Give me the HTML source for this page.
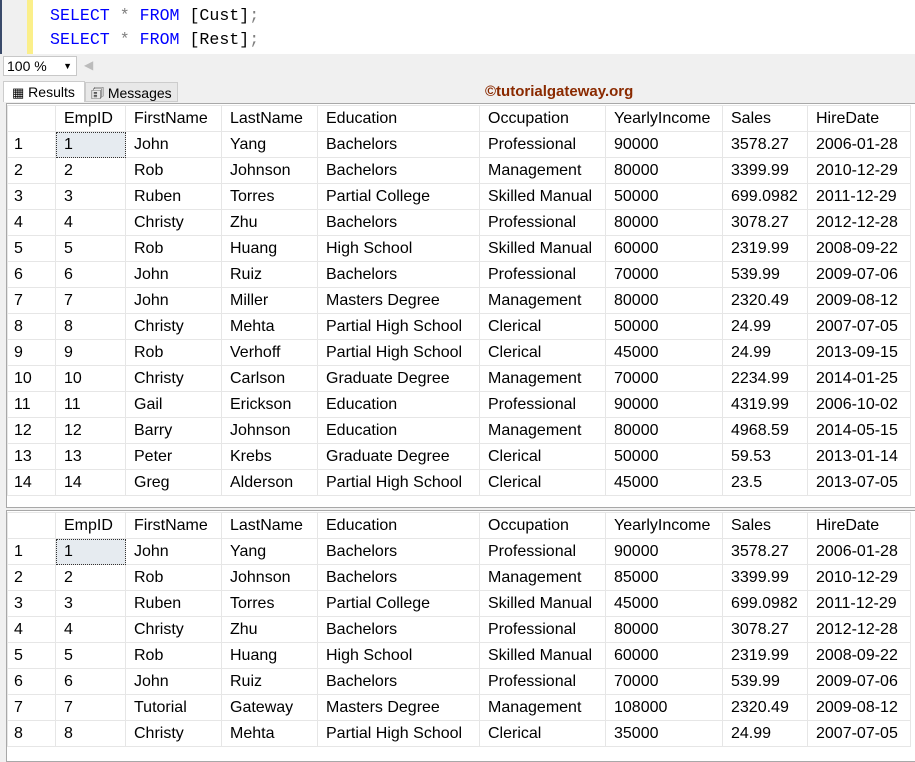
<!DOCTYPE html>
<html><head><meta charset="utf-8"><style>
body{margin:0;width:915px;height:753px;overflow:hidden;background:#f0f0f0;font-family:"Liberation Sans",Arial,sans-serif;position:relative}
.code{position:absolute;left:0;top:0;width:915px;height:54px;background:#fff}
.nav{position:absolute;left:0;top:0;width:2px;height:54px;background:#3a4a6a}
.gut{position:absolute;left:2px;top:0;width:25px;height:54px;background:#f0f0f0}
.yb{position:absolute;left:27px;top:0;width:6px;height:54px;background:#fbef8a}
.ln{position:absolute;left:50px;font-family:"Liberation Mono",monospace;font-size:16.6px;color:#000}
.k{color:#0000ff}.g{color:#808080}
.combo{position:absolute;left:3px;top:56px;background:#fff;border:1px solid #c8c8c8;font-size:14px;line-height:18px;padding-left:3px;box-sizing:border-box;width:74px;height:20px}
.tab{position:absolute;top:81px;height:21px;font-size:14px;line-height:21px;box-sizing:border-box}
.grid{position:absolute;left:6px;width:915px;background:#fff;border:1px solid #a8a8a8;border-right:none}
table{border-collapse:collapse;font-size:16px;table-layout:fixed;margin-top:1px}
td{height:25px;border:1px solid #e6e6e6;padding:0 0 0 8px;white-space:nowrap;overflow:hidden;line-height:25px}
td:first-child{padding-left:6px}
.sel{background:#e6ebf0;outline:1px dotted #333;outline-offset:-1px}
.wm{position:absolute;left:485px;top:83px;font-size:15px;font-weight:bold;color:#8a2a00}
</style></head><body>
<div class="code"><div class="nav"></div><div class="gut"></div><div class="yb"></div>
<div class="ln" style="top:6px"><span class="k">SELECT</span> <span class="g">*</span> <span class="k">FROM</span> [Cust]<span class="g">;</span></div>
<div class="ln" style="top:30px"><span class="k">SELECT</span> <span class="g">*</span> <span class="k">FROM</span> [Rest]<span class="g">;</span></div>
</div>
<div class="combo">100 %<span style="position:absolute;right:4px;top:0;font-size:9px">▼</span></div>
<span style="position:absolute;left:84px;top:58px;color:#bbb;font-size:12px">◀</span>
<div class="tab" style="left:3px;width:82px;background:#fff;border:1px solid #ccc;border-bottom:none;padding-left:8px"><span style="font-size:13px">▦</span> Results</div>
<div class="tab" style="left:85px;width:93px;background:#e8e8e8;border:1px solid #ccc;padding-left:5px;top:82px;height:20px;line-height:20px">🗊 Messages</div>
<div class="wm">©tutorialgateway.org</div>

<div class="grid" style="top:103px;height:403px">
<table id="t1"></table></div>
<div class="grid" style="top:510px;height:250px">
<table id="t2"></table></div>
<script>
var w=[48,70,96,96,162,126,117,85,103];
var h=["","EmpID","FirstName","LastName","Education","Occupation","YearlyIncome","Sales","HireDate"];
var d1=[["John","Yang","Bachelors","Professional","90000","3578.27","2006-01-28"],["Rob","Johnson","Bachelors","Management","80000","3399.99","2010-12-29"],["Ruben","Torres","Partial College","Skilled Manual","50000","699.0982","2011-12-29"],["Christy","Zhu","Bachelors","Professional","80000","3078.27","2012-12-28"],["Rob","Huang","High School","Skilled Manual","60000","2319.99","2008-09-22"],["John","Ruiz","Bachelors","Professional","70000","539.99","2009-07-06"],["John","Miller","Masters Degree","Management","80000","2320.49","2009-08-12"],["Christy","Mehta","Partial High School","Clerical","50000","24.99","2007-07-05"],["Rob","Verhoff","Partial High School","Clerical","45000","24.99","2013-09-15"],["Christy","Carlson","Graduate Degree","Management","70000","2234.99","2014-01-25"],["Gail","Erickson","Education","Professional","90000","4319.99","2006-10-02"],["Barry","Johnson","Education","Management","80000","4968.59","2014-05-15"],["Peter","Krebs","Graduate Degree","Clerical","50000","59.53","2013-01-14"],["Greg","Alderson","Partial High School","Clerical","45000","23.5","2013-07-05"]];
var d2=[["John","Yang","Bachelors","Professional","90000","3578.27","2006-01-28"],["Rob","Johnson","Bachelors","Management","85000","3399.99","2010-12-29"],["Ruben","Torres","Partial College","Skilled Manual","45000","699.0982","2011-12-29"],["Christy","Zhu","Bachelors","Professional","80000","3078.27","2012-12-28"],["Rob","Huang","High School","Skilled Manual","60000","2319.99","2008-09-22"],["John","Ruiz","Bachelors","Professional","70000","539.99","2009-07-06"],["Tutorial","Gateway","Masters Degree","Management","108000","2320.49","2009-08-12"],["Christy","Mehta","Partial High School","Clerical","35000","24.99","2007-07-05"]];
function build(id,d){var s="<colgroup>"+w.map(function(x){return '<col style="width:'+x+'px">'}).join("")+"</colgroup><tr>"+h.map(function(x){return"<td>"+x+"</td>"}).join("")+"</tr>";
d.forEach(function(r,i){s+="<tr><td>"+(i+1)+"</td><td"+(i==0?' class="sel"':'')+">"+(i+1)+"</td>"+r.map(function(x){return"<td>"+x+"</td>"}).join("")+"</tr>"});
var t=document.getElementById(id);t.innerHTML=s;t.style.width=w.reduce(function(a,b){return a+b})+"px";}
build("t1",d1);build("t2",d2);
</script>
</body></html>
